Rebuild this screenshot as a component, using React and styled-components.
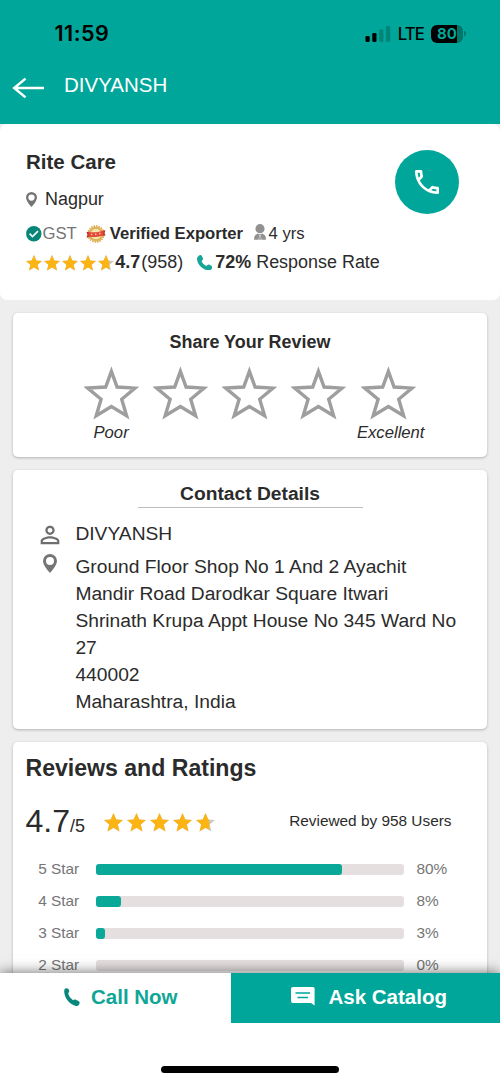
import React from "react";
import styled, { createGlobalStyle } from "styled-components";
import { MdOutlineLocalPhone, MdPersonOutline } from "react-icons/md";

const ratings = [
  { label: "5 Star", percent: 80 },
  { label: "4 Star", percent: 8 },
  { label: "3 Star", percent: 3 },
  { label: "2 Star", percent: 0 },
];

const GlobalStyle = createGlobalStyle`
  * {
    box-sizing: border-box;
  }
  body {
    margin: 0;
    background: #fff;
    font-family: "Liberation Sans", Arial, sans-serif;
    color: #2b2b2b;
  }
  svg {
    display: block;
    flex-shrink: 0;
  }
`;

const Screen = styled.div`
  width: 500px;
  height: 1083px;
  display: flex;
  flex-direction: column;
  overflow: hidden;
  background: #eee;
`;

const Header = styled.header`
  height: 124.4px;
  flex-shrink: 0;
  background: #00a699;
`;

const StatusBar = styled.div`
  height: 66px;
  display: flex;
  align-items: center;
  justify-content: space-between;
  padding: 1px 34px 0 54.5px;
  color: #000;
  font-family: Inter, sans-serif;
`;

const Clock = styled.span`
  margin-top: -1px;
  font-size: 21.5px;
  font-weight: 600;
  line-height: 26px;
  letter-spacing: 0.5px;
`;

const StatusIcons = styled.div`
  display: flex;
  align-items: center;
`;

const Network = styled.span`
  margin: 0 7px 0 6.5px;
  font-size: 16.8px;
  font-weight: 500;
  line-height: 20px;
  letter-spacing: -0.9px;
`;

const Battery = styled.div`
  width: 32px;
  height: 18px;
  border-radius: 6px;
  background: linear-gradient(to right, #000 26px, #00776d 26px);
  color: #00a699;
  font-size: 15px;
  font-weight: 700;
  line-height: 18px;
  text-align: center;
`;

const BatteryCap = styled.div`
  width: 2px;
  height: 5px;
  margin-left: 1px;
  border-radius: 0 2px 2px 0;
  background: #00776d;
`;

const TitleBar = styled.div`
  height: 38px;
  display: flex;
  align-items: center;
  gap: 19px;
  padding-left: 12px;
  color: #fff;
  font-size: 20.5px;

  svg {
    margin-top: 5px;
  }
`;

const Content = styled.main`
  flex: 1;
  min-height: 0;
  overflow: hidden;
`;

const Profile = styled.section`
  height: 175.9px;
  display: flex;
  justify-content: space-between;
  padding: 25.6px 41px 0 26px;
  border-radius: 7px;
  background: #fff;
`;

const Company = styled.h1`
  height: 24px;
  margin: 0;
  font-size: 20.5px;
  font-weight: 700;
  line-height: 24px;
`;

const Line = styled.div`
  height: 24px;
  display: flex;
  align-items: center;
  margin-top: ${(p) => p.$top}px;
  font-size: ${(p) => p.$size}px;
  white-space: nowrap;
`;

const Item = styled.span`
  display: flex;
  align-items: center;
  gap: ${(p) => p.$gap || 0}px;
  margin-right: ${(p) => p.$after || 0}px;
  color: ${(p) => p.$color || "inherit"};
`;

const CallButton = styled.button`
  width: 64px;
  height: 64px;
  flex-shrink: 0;
  display: flex;
  align-items: center;
  justify-content: center;
  padding: 0;
  border: 0;
  border-radius: 50%;
  background: #00a699;
  color: #fff;
`;

const Card = styled.section`
  height: ${(p) => p.$height}px;
  margin: 12.8px 13px 0;
  padding-top: ${(p) => p.$top}px;
  border-radius: 5px;
  background: #fff;
  box-shadow: 0 1px 3px rgba(0, 0, 0, 0.25);
`;

const CardTitle = styled.h2`
  margin: 0;
  font-size: ${(p) => p.$size}px;
  font-weight: 700;
  line-height: 24px;
  text-align: center;
`;

const RateRow = styled.div`
  display: flex;
  justify-content: space-between;
  margin: 12px 71.5px 0 71.2px;
`;

const RateLabels = styled.div`
  display: flex;
  justify-content: space-between;
  margin: 3.2px 62.5px 0 80.5px;
  font-size: 16.67px;
  font-style: italic;
  line-height: 20px;
`;

const ContactTitle = styled(CardTitle)`
  width: 225px;
  height: 25.8px;
  margin: 0 auto;
  border-bottom: 1px solid #bdbdbd;
`;

const ContactRow = styled.div`
  display: grid;
  grid-template-columns: 36px 1fr;
  align-items: start;
  margin-top: ${(p) => p.$top}px;
  padding: 0 26px 0 26.4px;
  font-size: 19.23px;
  line-height: 27px;
`;

const ContactIcon = styled.span`
  height: 27px;
  display: flex;
  align-items: center;
  margin-left: ${(p) => p.$left}px;
  padding-top: ${(p) => p.$top || 0}px;
  padding-bottom: ${(p) => p.$bottom || 0}px;
  color: #6e6e6e;
`;

const ReviewsTitle = styled(CardTitle)`
  padding-left: 12.5px;
  line-height: 28px;
  text-align: left;
`;

const Summary = styled.div`
  height: 40px;
  display: flex;
  align-items: center;
  margin: 19.2px 35.5px 0 12.5px;
`;

const Score = styled.div`
  width: 78.5px;
  padding-top: 4.6px;
  font-size: 32.05px;
  line-height: 40px;

  small {
    font-size: 17.95px;
  }
`;

const SummaryStars = styled.div`
  padding-top: 2px;
`;

const ReviewCount = styled.span`
  margin-left: auto;
  font-size: 15.38px;
`;

const RatingRow = styled.div`
  height: 32px;
  display: grid;
  grid-template-columns: 58px 307.7px 1fr;
  align-items: center;
  padding-left: 25.2px;
  color: #757575;
  font-size: 15.38px;
`;

const RatingList = styled.div`
  margin-top: 11.5px;
`;

const Percent = styled.span`
  padding-left: 12.5px;
`;

const Track = styled.div`
  height: 10.4px;
  margin-top: 1.5px;
  border-radius: 3px;
  background: #e5dfdf;
`;

const Fill = styled.div`
  height: 100%;
  border-radius: 3px;
  background: #0aa899;
`;

const Footer = styled.footer`
  position: relative;
  height: 110.4px;
  flex-shrink: 0;
  display: flex;
  flex-direction: column;
  align-items: center;
  background: #fff;
  box-shadow: 0 0 13px rgba(0, 0, 0, 0.6);
`;

const Actions = styled.div`
  width: 100%;
  height: 50.2px;
  display: grid;
  grid-template-columns: 231px 1fr;
`;

const Action = styled.button`
  display: flex;
  align-items: center;
  gap: ${(p) => p.$gap}px;
  padding: 0 0 1.4px ${(p) => p.$left}px;
  border: 0;
  background: ${(p) => (p.$primary ? "#00a699" : "#fff")};
  color: ${(p) => (p.$primary ? "#fff" : "#0fa697")};
  font: 700 20.5px "Liberation Sans", Arial, sans-serif;
`;

const HomeIndicator = styled.div`
  width: 178px;
  height: 6.5px;
  margin-top: 43.5px;
  border-radius: 4px;
  background: #000;
`;

const Signal = () => (
  <svg width="26" height="16" viewBox="0 0 26 16">
    <rect x="0.5" y="10" width="4.2" height="6" rx="1.2" />
    <rect x="7.3" y="7" width="4.2" height="9" rx="1.2" />
    <rect x="14.2" y="3.6" width="4.2" height="12.4" rx="1.2" fill="#008578" />
    <rect x="21" y="0" width="4.2" height="16" rx="1.2" fill="#008578" />
  </svg>
);

const BackArrow = () => (
  <svg width="33" height="22" viewBox="0 0 33 22" fill="none" stroke="#fff" strokeWidth="2.5">
    <path d="M13.5 1.6 2.2 11l11.3 9.4M2 11h30" />
  </svg>
);

const Pin = ({ width, color }) => (
  <svg width={width} height={width * 1.36} viewBox="0 0 14 19" fill={color}>
    <path
      fillRule="evenodd"
      d="M7 0a7 7 0 0 0-7 7c0 4.8 7 12 7 12s7-7.2 7-12a7 7 0 0 0-7-7Zm0 3.1a4 4 0 1 1 0 8 4 4 0 0 1 0-8Z"
    />
  </svg>
);

const CheckBadge = () => (
  <svg width="16.5" height="17" viewBox="0 0 16.5 17">
    <circle cx="7.8" cy="7.7" r="7.7" fill="#078579" />
    <path d="m3.6 7.6 2.9 2.9L12 5.1" fill="none" stroke="#fff" strokeWidth="1.6" />
  </svg>
);

const ExporterSeal = () => (
  <svg width="20" height="19" viewBox="0 0 20 19">
    <circle cx="10" cy="9" r="8" fill="none" stroke="#d9a53f" strokeWidth="1.6" strokeDasharray="1.4 1.1" />
    <circle cx="10" cy="9" r="7.6" fill="#dfb65c" />
    <circle cx="10" cy="9" r="5.7" fill="#f7e4ad" stroke="#c99a45" strokeWidth="0.6" />
    <path d="m.5 7 3-.2V12l-3 .8 1-3zM19.5 5.3l-3 .5V11l3-.5-1-2.6z" fill="#b92f24" />
    <path d="M2.5 7c5 .6 10 .2 15-1.600v4.800c-5 1.800-10 2.200-15 1.600z" fill="#e34a37" />
    <path d="M5.6 8.7v1.7M5 9.5h1.4M9.7 8.4v1.8M9 9.3h1.5M13.7 7.6v1.8M13 8.6h1.5" stroke="#f8cabb" strokeWidth="0.8" />
  </svg>
);

const Member = () => (
  <svg width="12" height="20" viewBox="0 0 12 20" fill="#919191">
    <circle cx="6" cy="4.7" r="4.6" />
    <path d="M3.7 9.6 5 10.2h2l1.3-.6 2.3 1.5q1.400 1 1.400 4.600H7.400L6.700 11H5.300l-.7 4.700H0q0-3.600 1.400-4.600z" />
    <path d="M5.6 11.2h.8l.5 4.200-.9.600-.9-.6z" />
  </svg>
);

const Handset = ({ size, color }) => (
  <svg width={size} height={size} viewBox="0 0 16 16" fill={color}>
    <path d="M2.3.5C3.500-.3 4.500.1 5.200 1.300L6 3.200c.4 1 .2 1.700-.5 2.300-.8.6-.8 1-.3 1.900.8 1.400 2 2.600 3.400 3.400.8.5 1.200.4 1.900-.3.7-.7 1.400-.9 2.300-.5l2 1c1.200.6 1.400 1.600.7 2.800-1 1.600-2.500 2.400-4.300 2.100C5.600 15.100.9 10.300.1 5-.2 3 .6 1.500 2.300.5Z" />
  </svg>
);

const SlimHandset = () => (
  <svg width="16" height="18" viewBox="0 0 16 18" fill="#07887b">
    <path d="M1.400.5C3-.4 4.600.5 5.100 2.300c.4 1.500 0 2.300-1 2.800.7 3 2.600 5.600 5 7.200.8-.8 1.900-1 3.200-.4l2.200 1c1.200.6 1.400 1.700.8 3-.6 1.500-2 2.200-3.600 2C5.200 16.500.2 9.500.2 3.300.2 2 .5 1 1.400.5Z" />
  </svg>
);

const Chat = () => (
  <svg width="24" height="20" viewBox="0 0 24 20">
    <path d="M2 0h20q1.600 0 1.600 1.600v17L20 16H2q-2 0-2-2V2q0-2 2-2Z" fill="#fff" />
    <path d="M4.500 6h14.500M6.500 10.500h10.500" stroke="#00a699" strokeWidth="1.300" />
  </svg>
);

const OutlineStar = () => (
  <svg width="55" height="54" viewBox="0 0 55 54" fill="none" stroke="#9e9e9e" strokeWidth="3.400">
    <path
      strokeMiterlimit="8"
      d="m27.400 5.300 5.700 15.700 18 1.100-13.400 11.200 4.900 16.400-15.200-9.200-15.200 9.200 4.900-16.400L3.700 22.100l18-1.100Z"
    />
  </svg>
);

const starPath = "m10 0 2.900 6.900 7.100.5-5.500 4.700 1.800 7.400L10 15.600l-6.300 3.900 1.800-7.400L0 7.400l7.100-.5Z";

const Stars = ({ size, gap, id }) => (
  <Item $gap={gap}>
    {[1, 1, 1, 1, 0.7].map((filled, i) => (
      <svg key={i} width={size} height={size} viewBox="0 0 20 20">
        <defs>
          <clipPath id={`${id}-${i}`}>
            <rect width={20 * filled} height="20" />
          </clipPath>
        </defs>
        <path d={starPath} fill="#c9c9c9" />
        <path d={starPath} fill="#fbb413" clipPath={`url(#${id}-${i})`} />
      </svg>
    ))}
  </Item>
);

const App = () => {
  return (
    <Screen>
      <GlobalStyle />
      <Header>
        <StatusBar>
          <Clock>11:59</Clock>
          <StatusIcons>
            <Signal />
            <Network>LTE</Network>
            <Battery>80</Battery>
            <BatteryCap />
          </StatusIcons>
        </StatusBar>
        <TitleBar>
          <BackArrow />
          <span>DIVYANSH</span>
        </TitleBar>
      </Header>

      <Content>
        <Profile>
          <div>
            <Company>Rite Care</Company>
            <Line $top={13.5} $size={17.95}>
              <Item $gap={8}>
                <Pin width={11} color="#757575" />
                <span>Nagpur</span>
              </Item>
            </Line>
            <Line $top={10.6} $size={16.67}>
              <Item $color="#757575" $after={9.5}>
                <CheckBadge />
                <span>GST</span>
              </Item>
              <Item $gap={3.5} $after={10.5}>
                <ExporterSeal />
                <b>Verified Exporter</b>
              </Item>
              <Item $gap={3}>
                <Member />
                <span>4 yrs</span>
              </Item>
            </Line>
            <Line $top={4.6} $size={17.95}>
              <Item $gap={1.2} $after={13.8}>
                <Stars size={16} gap={2} id="small" />
                <b>4.7</b>
                <span>(958)</span>
              </Item>
              <Item $gap={2.8}>
                <Handset size={15.5} color="#17a596" />
                <span>
                  <b>72%</b> Response Rate
                </span>
              </Item>
            </Line>
          </div>
          <CallButton>
            <MdOutlineLocalPhone size={32} />
          </CallButton>
        </Profile>

        <Card $height={144} $top={16.5}>
          <CardTitle $size={17.95}>Share Your Review</CardTitle>
          <RateRow>
            {[1, 2, 3, 4, 5].map((n) => (
              <OutlineStar key={n} />
            ))}
          </RateRow>
          <RateLabels>
            <span>Poor</span>
            <span>Excellent</span>
          </RateLabels>
        </Card>

        <Card $height={259} $top={12.2}>
          <ContactTitle $size={19.23}>Contact Details</ContactTitle>
          <ContactRow $top={11.8}>
            <ContactIcon $left={-3.5} $top={3}>
              <MdPersonOutline size={28} />
            </ContactIcon>
            <span>DIVYANSH</span>
          </ContactRow>
          <ContactRow $top={6}>
            <ContactIcon $left={4} $bottom={5}>
              <Pin width={14} color="#757575" />
            </ContactIcon>
            <span>
              Ground Floor Shop No 1 And 2 Ayachit
              <br />
              Mandir Road Darodkar Square Itwari
              <br />
              Shrinath Krupa Appt House No 345 Ward No 27
              <br />
              440002
              <br />
              Maharashtra, India
            </span>
          </ContactRow>
        </Card>

        <Card $height={300} $top={12.3}>
          <ReviewsTitle $size={23.08}>Reviews and Ratings</ReviewsTitle>
          <Summary>
            <Score>
              4.7<small>/5</small>
            </Score>
            <SummaryStars>
              <Stars size={19} gap={4} id="large" />
            </SummaryStars>
            <ReviewCount>Reviewed by 958 Users</ReviewCount>
          </Summary>
          <RatingList>
            {ratings.map((rating) => (
              <RatingRow key={rating.label}>
                <span>{rating.label}</span>
                <Track>
                  <Fill style={{ width: `${rating.percent}%` }} />
                </Track>
                <Percent>{rating.percent}%</Percent>
              </RatingRow>
            ))}
          </RatingList>
        </Card>
      </Content>

      <Footer>
        <Actions>
          <Action $left={64} $gap={11}>
            <SlimHandset />
            <span>Call Now</span>
          </Action>
          <Action $primary $left={59.5} $gap={14}>
            <Chat />
            <span>Ask Catalog</span>
          </Action>
        </Actions>
        <HomeIndicator />
      </Footer>
    </Screen>
  );
};

export default App;
